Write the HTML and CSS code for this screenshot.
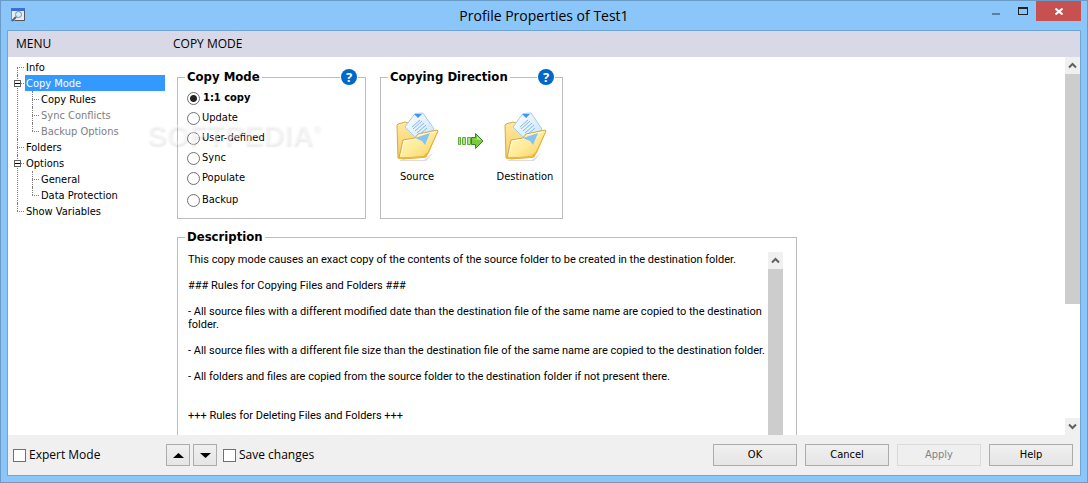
FILE: index.html
```html
<!DOCTYPE html>
<html lang="en">

<head>
    <meta charset="UTF-8">
    <meta name="viewport" content="width=device-width, initial-scale=1.0">
    <title>Profile Properties of Test1</title>
    <link rel="stylesheet" href="styles.css">
</head>

<body>
    <!-- Shared icon shapes -->
    <svg class="icon-defs" width="0" height="0" aria-hidden="true">
        <defs>
            <linearGradient id="folder-front" x1="0" y1="0" x2="1" y2="1">
                <stop offset="0" stop-color="#fff9c4"/>
                <stop offset="0.5" stop-color="#ffec9a"/>
                <stop offset="1" stop-color="#f8cc5a"/>
            </linearGradient>
            <linearGradient id="folder-back" x1="0" y1="0" x2="0" y2="1">
                <stop offset="0" stop-color="#ffe9a0"/>
                <stop offset="1" stop-color="#f7cb62"/>
            </linearGradient>
            <linearGradient id="paper" x1="0" y1="0" x2="1" y2="1">
                <stop offset="0" stop-color="#ffffff"/>
                <stop offset="1" stop-color="#c5e2fb"/>
            </linearGradient>
        </defs>
        <symbol id="folder" viewBox="0 0 44 50">
            <path d="M5 48h24l10-8-8 9H5z" fill="#ddd"/>
            <path d="M2 13l1-1 7-2 3 1 1 4 22 2 4 8-9 20-23 2-5-1z" fill="url(#folder-back)" stroke="#dba941"/>
            <path d="M10 15L20 1.500l8-0.500 11 16-13 14z" fill="url(#paper)" stroke="#a5cdf0"/>
            <path d="M19 2h8l-4 4z" fill="#3f96ea"/>
            <path d="M17 15l8-7M18 17l9-8M20 19l9-8M22 21l9-8M24 23l8-7" stroke="#83b8ee" stroke-width="1"/>
            <path d="M4 46L8 28l12-2 3-4 19-4 1 1-10 22-5 4z" fill="url(#folder-front)" stroke="#dda63a"/>
            <path d="M6 44l3-15 12-2 3-4 16-3" fill="none" stroke="#fffce0"/>
            <path d="M20 26l15-5-5 12-3-4z" fill="#84c2fa"/>
            <path d="M4 46l24-2 5-4 9-19-8 20-5 5-24 1z" fill="#edb83e"/>
        </symbol>
        <symbol id="arrow-up" viewBox="0 0 9 7">
            <path d="M1 5.500L4.500 2L8 5.500" fill="none" stroke="#606060" stroke-width="2"/>
        </symbol>
        <symbol id="arrow-down" viewBox="0 0 9 7">
            <path d="M1 1.500L4.500 5L8 1.500" fill="none" stroke="#606060" stroke-width="2"/>
        </symbol>
    </svg>

    <div class="window">
        <!-- Title bar -->
        <header class="titlebar">
            <svg class="app-icon" width="15" height="15" viewBox="0 0 15 15" aria-hidden="true">
                <rect x="0.500" y="0.500" width="13" height="12" fill="#e6edf8" stroke="#7890b8"/>
                <rect x="0" y="0" width="14" height="3" fill="#3e6fd0"/>
                <path d="M13.500 3v9.500H4" fill="none" stroke="#555"/>
                <circle cx="7.500" cy="6.500" r="3" fill="#d5eefa" stroke="#7e8c96"/>
                <path d="M5 9L1 13" stroke="#5c646c" stroke-width="2"/>
            </svg>
            <h1>Profile Properties of Test1</h1>
            <div class="window-buttons">
                <button type="button" class="minimize" aria-label="Minimize">
                    <svg width="8" height="8"><rect y="6" width="8" height="2" fill="#5c7f9e"/></svg>
                </button>
                <button type="button" class="maximize" aria-label="Maximize">
                    <svg width="10" height="8"><path d="M0 0h10v8H0zM1 2v5h8V2z" fill="#222" fill-rule="evenodd"/></svg>
                </button>
                <button type="button" class="close" aria-label="Close">
                    <svg width="8" height="7" viewBox="0 0 8 7"><path d="M0.500 0.500L7.500 6.500M7.500 0.500L0.500 6.500" stroke="#fff" stroke-width="2"/></svg>
                </button>
            </div>
        </header>

        <div class="client">
            <div class="headings">
                <h2>MENU</h2>
                <h2>COPY MODE</h2>
            </div>

            <div class="body">
                <!-- Menu tree -->
                <nav class="menu">
                    <ul class="tree">
                        <li><a href="#">Info</a></li>
                        <li>
                            <button type="button" class="toggle" aria-label="Collapse Copy Mode"></button>
                            <a href="#" class="selected">Copy Mode</a>
                            <ul>
                                <li><a href="#">Copy Rules</a></li>
                                <li><a href="#" class="muted">Sync Conflicts</a></li>
                                <li><a href="#" class="muted">Backup Options</a></li>
                            </ul>
                        </li>
                        <li><a href="#">Folders</a></li>
                        <li>
                            <button type="button" class="toggle" aria-label="Collapse Options"></button>
                            <a href="#">Options</a>
                            <ul>
                                <li><a href="#">General</a></li>
                                <li><a href="#">Data Protection</a></li>
                            </ul>
                        </li>
                        <li><a href="#">Show Variables</a></li>
                    </ul>
                </nav>

                <main class="content">
                    <div class="panels">
                        <fieldset class="panel copy-mode">
                            <legend>Copy Mode</legend>
                            <button type="button" class="help" aria-label="Help on copy mode">?</button>
                            <label class="radio checked"><input type="radio" name="mode" checked>1:1 copy</label>
                            <label class="radio"><input type="radio" name="mode">Update</label>
                            <label class="radio"><input type="radio" name="mode">User-defined</label>
                            <label class="radio"><input type="radio" name="mode">Sync</label>
                            <label class="radio"><input type="radio" name="mode">Populate</label>
                            <label class="radio"><input type="radio" name="mode">Backup</label>
                        </fieldset>

                        <fieldset class="panel direction">
                            <legend>Copying Direction</legend>
                            <button type="button" class="help" aria-label="Help on copying direction">?</button>
                            <div class="flow">
                                <figure>
                                    <svg width="44" height="50"><use href="#folder"/></svg>
                                    <figcaption>Source</figcaption>
                                </figure>
                                <svg class="flow-arrow" width="26" height="16" viewBox="0 0 26 16" aria-hidden="true">
                                    <path d="M0.500 4.500h2v7h-2zM4.500 4.500h3v7h-3zM9.500 4.500h3v7h-3z" fill="#b5e08a" stroke="#5fae3a"/>
                                    <path d="M13.500 4.500h4v-4l7.500 7.500-7.500 7.500v-4h-4z" fill="#7cc83e" stroke="#2c8a35"/>
                                    <path d="M14 6h5V3l4 4z" fill="#c5ea7e"/>
                                </svg>
                                <figure>
                                    <svg width="44" height="50"><use href="#folder"/></svg>
                                    <figcaption>Destination</figcaption>
                                </figure>
                            </div>
                        </fieldset>
                    </div>

                    <fieldset class="panel description">
                        <legend>Description</legend>
                        <div class="description-body">
                            <div class="description-text">
                                <p>This copy mode causes an exact copy of the contents of the source folder to be created in the destination folder.</p>
                                <p>### Rules for Copying Files and Folders ###</p>
                                <p>- All source files with a different modified date than the destination file of the same name are copied to the destination folder.</p>
                                <p>- All source files with a different file size than the destination file of the same name are copied to the destination folder.</p>
                                <p>- All folders and files are copied from the source folder to the destination folder if not present there.</p>
                                <p class="section">+++ Rules for Deleting Files and Folders +++</p>
                            </div>
                            <div class="scrollbar">
                                <button type="button" aria-label="Scroll description up"><svg width="9" height="7"><use href="#arrow-up"/></svg></button>
                                <div class="thumb"></div>
                            </div>
                        </div>
                    </fieldset>
                </main>

                <div class="scrollbar main-scrollbar">
                    <button type="button" aria-label="Scroll up"><svg width="9" height="7"><use href="#arrow-up"/></svg></button>
                    <div class="track"><div class="thumb"></div></div>
                    <button type="button" aria-label="Scroll down"><svg width="9" height="7"><use href="#arrow-down"/></svg></button>
                </div>

                <div class="watermark">SOFTPEDIA<sup>®</sup></div>
            </div>

            <!-- Bottom bar -->
            <footer class="footer">
                <label class="check expert"><input type="checkbox">Expert Mode</label>
                <div class="steps">
                    <button type="button" class="btn step" aria-label="Previous page"><svg width="11" height="5"><path d="M0 5L5.500 0L11 5z"/></svg></button>
                    <button type="button" class="btn step" aria-label="Next page"><svg width="11" height="5"><path d="M0 0L5.500 5L11 0z"/></svg></button>
                </div>
                <label class="check"><input type="checkbox">Save changes</label>
                <div class="actions">
                    <button type="button" class="btn">OK</button>
                    <button type="button" class="btn">Cancel</button>
                    <button type="button" class="btn" disabled>Apply</button>
                    <button type="button" class="btn">Help</button>
                </div>
            </footer>
        </div>
    </div>
</body>

</html>
```
FILE: styles.css
```css
* {
    box-sizing: border-box;
}

body {
    margin: 0;
    font-family: "DejaVu Sans Condensed", "DejaVu Sans", sans-serif;
    font-size: 11px;
    line-height: 16px;
    color: #000;
}

h1,
h2,
p,
ul,
figure {
    margin: 0;
    padding: 0;
}

button {
    font: inherit;
    color: inherit;
    padding: 0;
}

svg {
    display: block;
}

a {
    color: inherit;
    text-decoration: none;
}

.icon-defs {
    position: absolute;
}

.window {
    display: flex;
    flex-direction: column;
    height: 100vh;
    padding: 0 6px 6px;
    border: 1px solid #6a9bc6;
    background-color: #8bc6fa;
}

/* Title bar */
.titlebar {
    display: grid;
    grid-template-columns: 1fr auto 1fr;
    align-items: center;
    height: 29px;
    flex: none;
}

.app-icon {
    margin-left: 4px;
}

.titlebar h1 {
    font-family: "Open Sans", "Noto Sans", sans-serif;
    font-size: 14px;
    font-weight: normal;
}

.window-buttons {
    display: flex;
    justify-content: flex-end;
    align-self: start;
}

.window-buttons button {
    display: flex;
    align-items: center;
    justify-content: center;
    width: 27px;
    height: 20px;
    border: none;
    background: none;
}

.window-buttons .close {
    width: 45px;
    background-color: #c75050;
}

/* Client area */
.client {
    flex: 1;
    min-height: 0;
    display: flex;
    flex-direction: column;
    border: 1px solid #72a5d2;
    background-color: #fff;
}

.headings {
    display: flex;
    flex: none;
    height: 26px;
    background-color: #d9d8e6;
}

.headings h2 {
    padding-left: 8px;
    font-family: "Open Sans", "Noto Sans", sans-serif;
    font-size: 12px;
    font-weight: normal;
    line-height: 26px;
}

.headings h2:first-child,
.menu {
    width: 157px;
    flex: none;
}

.body {
    position: relative;
    flex: 1;
    min-height: 0;
    display: flex;
    overflow: hidden;
}

/* Menu tree */
.menu {
    padding-top: 2px;
}

.tree,
.tree ul {
    list-style: none;
}

.tree li {
    position: relative;
    padding-left: 17px;
}

.tree li li {
    padding-left: 15px;
}

.tree a {
    display: block;
    padding: 1px 0 0 1px;
    line-height: 15px;
}

.tree .selected {
    background-color: #3399ff;
    color: #fff;
}

.tree .muted {
    color: #808080;
}

.tree li::before,
.tree li::after {
    content: "";
    position: absolute;
    left: 9px;
}

.tree li li::before,
.tree li li::after {
    left: 7px;
}

.tree li::before {
    top: 0;
    bottom: 0;
    border-left: 1px dotted #808080;
}

.tree li::after {
    top: 8px;
    width: 7px;
    border-top: 1px dotted #808080;
}

.tree > li:first-child::before {
    top: 8px;
}

.tree li:last-child::before {
    bottom: auto;
    height: 8px;
}

.toggle {
    position: absolute;
    z-index: 1;
    left: 6px;
    top: 5px;
    width: 7px;
    height: 7px;
    border: 1px solid #606060;
    background: linear-gradient(#000, #000) center / 5px 1px no-repeat #fff;
}

/* Content */
.content {
    flex: 1;
    min-width: 0;
    padding: 12px 12px 0;
}

.panels {
    display: flex;
    gap: 14px;
    margin-bottom: 10px;
}

.panel {
    position: relative;
    margin: 0;
    min-width: 0;
    padding: 0 9px;
    border: 1px solid #bcbcbc;
}

.panel legend {
    margin-left: -2px;
    padding: 0 2px;
    font-size: 13px;
    font-weight: bold;
}

.panel.copy-mode {
    width: 189px;
    height: 150px;
    padding-top: 3px;
}

.direction {
    width: 183px;
    height: 150px;
}

.help {
    position: absolute;
    top: -16px;
    right: 8px;
    width: 16px;
    height: 16px;
    border: none;
    border-radius: 50%;
    background-color: #0068c8;
    color: #fff;
    font-family: "Noto Sans", sans-serif;
    font-size: 13px;
    font-weight: bold;
    box-shadow: 0 0 0 1px #fff;
}

.radio {
    display: flex;
    align-items: center;
    gap: 2px;
    height: 20px;
}

.radio.checked {
    gap: 3px;
    font-weight: bold;
}

.radio:last-child {
    height: 24px;
}

.radio input {
    appearance: none;
    width: 13px;
    height: 13px;
    margin: 0;
    border: 1px solid #707070;
    border-radius: 50%;
    background-color: #fff;
}

.radio input:checked {
    background: radial-gradient(circle, #222 3px, #fff 4px);
}

.flow {
    display: flex;
    justify-content: space-between;
    padding: 27px 6px 0 5px;
}

.flow figure {
    display: flex;
    flex-direction: column;
    align-items: center;
    gap: 7px;
    width: 44px;
}

.flow-arrow {
    margin-top: 21px;
}

.description {
    max-width: 620px;
    height: 300px;
}

.description-body {
    display: flex;
    justify-content: space-between;
    height: 280px;
    padding: 7px 4px 0 1px;
}

.description-text {
    width: 580px;
    padding-top: 1px;
    font-family: Roboto, sans-serif;
    line-height: 13px;
}

.description-text p {
    margin-bottom: 13px;
}

.description-text .section {
    margin-top: 26px;
}

/* Scrollbars */
.scrollbar {
    display: flex;
    flex-direction: column;
    width: 15px;
    flex: none;
}

.scrollbar button {
    display: flex;
    align-items: center;
    justify-content: center;
    flex: none;
    height: 17px;
    border: none;
    background-color: #f0f0f0;
}

.track {
    flex: 1;
}

.thumb {
    flex: 1;
    background-color: #cdcdcd;
}

.track .thumb {
    height: 67%;
}

.watermark {
    position: absolute;
    left: 139px;
    top: 60px;
    font-family: "Liberation Sans", Arial, sans-serif;
    font-size: 29px;
    font-weight: bold;
    line-height: 36px;
    color: rgba(255, 255, 255, 0.4);
    text-shadow: 1px 2px 2px rgba(0, 0, 0, 0.08);
    pointer-events: none;
}

.watermark sup {
    font-size: 10px;
    line-height: 0;
    vertical-align: 13px;
}

/* Bottom bar */
.footer {
    display: flex;
    align-items: center;
    flex: none;
    height: 40px;
    padding: 0 7px 0 5px;
    background-color: #f0f0f0;
}

.check {
    display: flex;
    align-items: center;
    gap: 3px;
    font-family: "Open Sans", "Noto Sans", sans-serif;
    font-size: 12px;
}

.expert {
    width: 153px;
}

.check input {
    appearance: none;
    width: 13px;
    height: 13px;
    margin: 0;
    border: 1px solid #707070;
    background-color: #fff;
}

.steps {
    display: flex;
    gap: 3px;
    margin-right: 6px;
}

.btn {
    width: 84px;
    height: 22px;
    border: 1px solid #acacac;
    background: linear-gradient(#f0f0f0, #e5e5e5);
}

.btn:disabled {
    border-color: #d9d9d9;
    background: #efefef;
    color: #838383;
}

.step {
    display: flex;
    align-items: center;
    justify-content: center;
    width: 24px;
}

.actions {
    display: flex;
    gap: 8px;
    margin-left: auto;
}
```
